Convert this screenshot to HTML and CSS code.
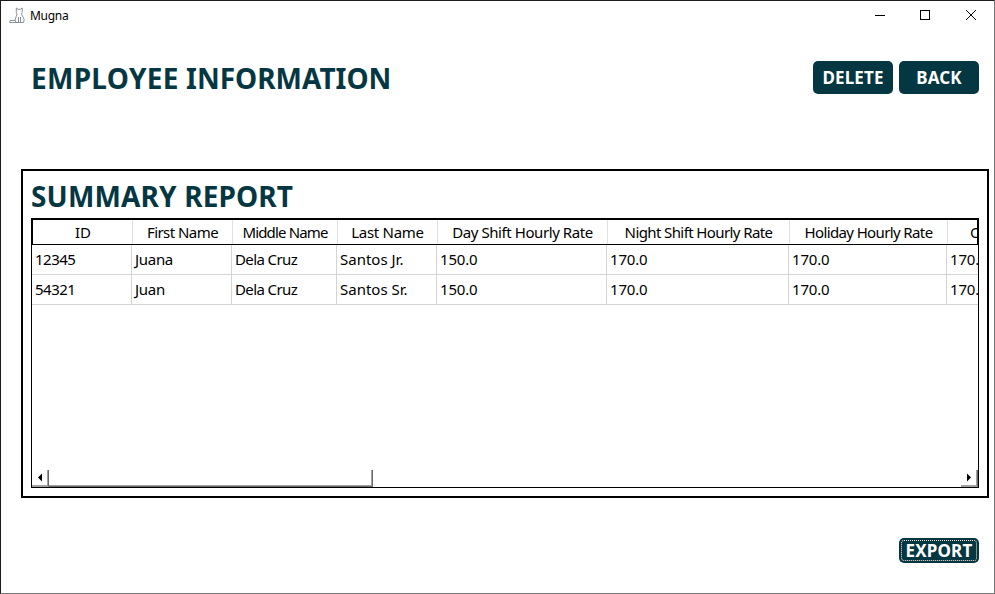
FILE: index.html
```html
<!DOCTYPE html>
<html lang="en">
<head>
<meta charset="utf-8">
<title>Mugna</title>
<link rel="stylesheet" href="styles.css">
</head>
<body>
<div class="window">
  <header class="titlebar">
    <svg class="app-icon" width="17" height="17" viewBox="0 0 17 17" fill="none" stroke="#7b888b" stroke-width="0.9"><path d="M7.300 5.500V1L9 2.300h2.500L13.200 1v4.500L12.500 7l2.700 5.500L14.500 15.500H7L6 13l2-6zM9.500 10v5.500M11.500 10v5.500M6 13.500H1L.7 15.500H7"/></svg>
    <span class="app-name">Mugna</span>
    <svg class="controls" width="125" height="30" viewBox="0 0 125 30" fill="none" stroke="#000" shape-rendering="crispEdges"><path d="M5 15.500H15M50.500 10.500h9v9h-9z"/><path d="M96 10L106 20M106 10L96 20" shape-rendering="auto"/></svg>
  </header>
  <main class="content">
    <div class="top">
      <h1 class="heading heading-main"><span class="wide">EMPLOYEE</span> INFORMATION</h1>
      <div class="actions"><button class="btn">DELETE</button><button class="btn">BACK</button></div>
    </div>
    <section class="panel">
      <h2 class="heading heading-report">SUMMARY REPORT</h2>
      <div class="table">
        <div class="row head"><span class="id">ID</span><span class="first">First Name</span><span class="middle">Middle Name</span><span class="last-name">Last Name</span><span class="day">Day Shift Hourly Rate</span><span class="night">Night Shift Hourly Rate</span><span class="holiday">Holiday Hourly Rate</span><span class="cut">OT</span></div>
        <div class="row"><span class="code">12345</span><span class="given">Juana</span><span class="mid">Dela Cruz</span><span>Santos Jr.</span><span class="num">150.0</span><span class="num">170.0</span><span class="num">170.0</span><span class="num">170.0</span></div>
        <div class="row"><span class="code">54321</span><span class="given">Juan</span><span class="mid">Dela Cruz</span><span>Santos Sr.</span><span class="num">150.0</span><span class="num">170.0</span><span class="num">170.0</span><span class="num">170.0</span></div>
        <div class="scrollbar"><div class="step"><svg width="17" height="17"><path d="M6 7.500L10 3.500v8z"/></svg></div><div class="thumb"></div><div class="step last"><svg width="17" height="17"><path d="M10 7.500L6 3.500v8z"/></svg></div></div>
      </div>
    </section>
    <button class="btn export">EXPORT</button>
  </main>
</div>
</body>
</html>
```
FILE: styles.css
```css
* { box-sizing: border-box; }
body { margin: 0; background: #fff; font-family: "Noto Sans", sans-serif; color: #000; overflow: hidden; }
.window { height: 594px; border: 1px solid #777; border-top-color: #1f1a1b; border-left-color: #1f1a1b; }
.titlebar { height: 30px; display: flex; align-items: center; padding-left: 8px; }
.app-icon { margin-top: -1px; }
.app-name { font-size: 12px; line-height: 16px; margin-left: 4px; letter-spacing: -0.3px; }
.controls { margin-left: auto; margin-top: -2px; margin-right: -1px; }
.content { padding: 30px 5px 0 20px; }
.top { display: flex; justify-content: space-between; height: 108px; padding: 0 10px; }
.heading { margin: 0; font-weight: 700; font-size: 28px; line-height: 34px; color: #053742; white-space: nowrap; }
.wide { letter-spacing: 0.3px; }
.actions { display: flex; gap: 6px; align-items: flex-start; }
.btn { width: 80px; height: 33px; padding: 0; border: 0; border-radius: 5px; background: #053742; color: #fff; font: 700 17px/33px "Noto Sans", sans-serif; letter-spacing: 0.15px; white-space: nowrap; }
.panel { border: 2px solid #000; width: 968px; height: 329px; padding: 8px; }
.heading-report { height: 39px; letter-spacing: 0.15px; }
.table { width: 948px; height: 270px; border: 1px solid #000; overflow: hidden; display: flex; flex-direction: column; }
.row { display: grid; grid-template-columns: 100px 100px 105px 100px 170px 182px 158px 100px; height: 30px; flex: none; }
.row span { font-size: 15px; line-height: 29px; padding-left: 3px; border-right: 1px solid #d4d4d4; border-bottom: 1px solid #d4d4d4; white-space: nowrap; }
.row .code { letter-spacing: -0.5px; }
.row .given { letter-spacing: -0.3px; }
.row .mid { letter-spacing: -0.6px; }
.row .num { letter-spacing: -0.2px; }
.row.head { height: 26px; border: 1px solid #000; overflow: hidden; }
.row.head span { line-height: 24px; padding: 0; text-align: center; border-bottom: 0; border-right-color: #e0e0e0; }
.row.head .id { padding-left: 1px; }
.row.head .first { letter-spacing: -0.55px; }
.row.head .middle { letter-spacing: -0.85px; }
.row.head .last-name { letter-spacing: -0.3px; }
.row.head .day { letter-spacing: -0.42px; }
.row.head .night { letter-spacing: -0.6px; }
.row.head .holiday { letter-spacing: -0.62px; }
.row.head .cut { text-align: left; padding-left: 22px; }
.scrollbar { margin-top: auto; height: 17px; display: flex; }
.step { width: 17px; height: 17px; border-right: 1px solid #696969; border-bottom: 1px solid #a0a0a0; box-shadow: inset -1px -1px #a0a0a0; }
.step svg { display: block; }
.thumb { width: 324px; border-right: 1px solid #696969; border-bottom: 1px solid #696969; box-shadow: inset -1px -1px #a0a0a0; }
.step.last { margin-left: auto; }
.export { display: block; height: 25px; line-height: 25px; margin: 40px 10px 0 auto; outline: 1px dotted #ffe4dc; outline-offset: -3px; }
```
